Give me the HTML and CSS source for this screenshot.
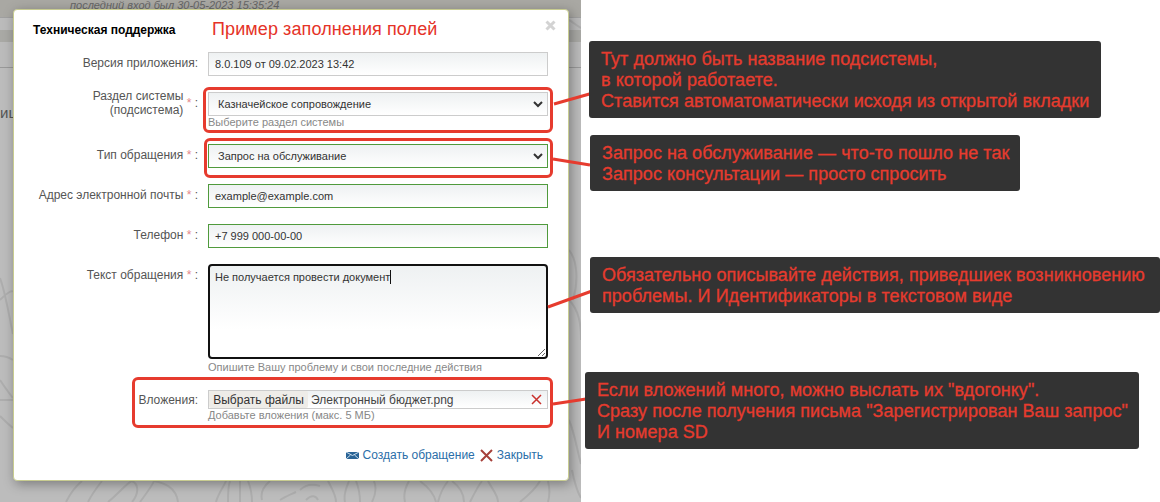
FILE: index.html
```html
<!DOCTYPE html>
<html lang="en">
<head>
    <meta charset="UTF-8">
    <title>Техническая поддержка</title>
    <link rel="stylesheet" href="styles.css">
</head>
<body>
    <div class="backdrop">
        <p class="last-login">последний вход был 30-05-2023 15:35:24</p>
        <div class="band-line"></div>
        <div class="band"></div>
        <div class="band-line band-line-low"></div>
        <p class="cut-word">ице</p>
        <svg class="ornament" width="581" height="502" viewBox="0 0 581 502" fill="none" stroke="#000" stroke-opacity="0.08" stroke-width="2">
            <path d="M0 278c6 16 10 44 13 56M0 300c8-8 12-10 13-8M0 356c6 0 10 2 13 4M0 380c4 6 8 12 13 18M0 400h13M0 416c4 4 8 8 13 12"/>
            <path d="M66 502c4-8 10-16 16-21M88 502c4-8 10-16 14-21M108 502c10-8 20-20 24-21c8 4 6 14 0 21M140 502c6-8 12-16 14-21c10 2 22 6 24 21"/>
            <path d="M216 502c2-8 8-16 10-21M228 502c0-8 0-16 2-21M240 502c0-8 0-16 0-21M252 502c0-8-2-16-4-21M262 500c-2-8 2-14 8-19M280 500c6-4 12-6 16-8"/>
            <path d="M300 490c6-6 14-6 20-4M306 500c6-6 10-4 12 0M328 481c4 8 8 14 8 21M345 502c-2-8 2-16 4-21M360 502c0-8-2-16-4-21M372 502c4-8 4-16 2-21"/>
            <path d="M405 502c-2-8 0-14 4-21M420 481c8 6 14 12 16 21M438 502c2-8 6-16 10-21M452 481c8 6 12 14 12 21M470 502c4-8 8-16 12-21M488 481c4 8 10 14 10 21"/>
            <path d="M520 502c10-8 16-14 20-21M548 481c2 8 2 14 0 21M572 470c2 10 4 20 9 28"/>
            <path d="M569 250c8 10 10 30 4 50M569 300c10 10 12 24 12 40M569 420c6 14 8 30 12 44M569 20c4 2 8 6 12 8"/>
        </svg>

        <div class="modal">
            <header class="modal-head">
                <h2 class="modal-title">Техническая поддержка</h2>
                <span class="example-title">Пример заполнения полей</span>
                <svg class="modal-close" width="11" height="11" viewBox="0 0 11 11"><path d="M1.500 1.500l8 8M9.500 1.500l-8 8" stroke="#d3d3d3" stroke-width="3"/></svg>
            </header>

            <form class="support-form">
                <div class="form-row">
                    <label>Версия приложения:</label>
                    <div class="field">
                        <input class="control" type="text" value="8.0.109 от 09.02.2023 13:42">
                    </div>
                </div>

                <div class="form-row">
                    <label class="label-double"><span>Раздел системы<br>(подсистема)</span>&nbsp;<i>*</i> :</label>
                    <div class="field">
                        <div class="select-wrap">
                            <select class="control"><option>Казначейское сопровождение</option></select>
                            <svg class="chevron" width="10" height="7" viewBox="0 0 10 7"><path d="M1 1l4 4 4-4" fill="none" stroke="#333" stroke-width="2"/></svg>
                        </div>
                        <p class="hint">Выберите раздел системы</p>
                    </div>
                </div>

                <div class="form-row">
                    <label>Тип обращения <i>*</i> :</label>
                    <div class="field">
                        <div class="select-wrap">
                            <select class="control valid"><option>Запрос на обслуживание</option></select>
                            <svg class="chevron" width="10" height="7" viewBox="0 0 10 7"><path d="M1 1l4 4 4-4" fill="none" stroke="#333" stroke-width="2"/></svg>
                        </div>
                    </div>
                </div>

                <div class="form-row">
                    <label>Адрес электронной почты <i>*</i> :</label>
                    <div class="field">
                        <input class="control valid" type="text" value="example@example.com">
                    </div>
                </div>

                <div class="form-row">
                    <label>Телефон <i>*</i> :</label>
                    <div class="field">
                        <input class="control valid" type="text" value="+7 999 000-00-00">
                    </div>
                </div>

                <div class="form-row form-row-text">
                    <label>Текст обращения <i>*</i> :</label>
                    <div class="field">
                        <div class="text-box">Не получается провести документ<span class="caret"></span></div>
                        <p class="hint hint-text">Опишите Вашу проблему и свои последние действия</p>
                    </div>
                </div>

                <div class="form-row form-row-files">
                    <label>Вложения:</label>
                    <div class="field">
                        <div class="file-box">
                            <button type="button" class="file-button">Выбрать файлы</button>
                            <span class="file-name">Электронный бюджет.png</span>
                            <svg class="file-remove" width="11" height="11" viewBox="0 0 11 11"><path d="M1 1l9 9M10 1l-9 9" stroke="#c9302c" stroke-width="1.500"/></svg>
                        </div>
                        <p class="hint">Добавьте вложения (макс. 5 МБ)</p>
                    </div>
                </div>

                <div class="modal-actions">
                    <a href="#">
                        <svg width="13" height="7" viewBox="0 0 13 7"><rect width="13" height="7" fill="#2a6496"/><path d="M0 0l6.500 3.500L13 0M0 7l4.500-4M13 7 8.500 3" fill="none" stroke="#cfe0ee" stroke-width="1"/></svg>
                        Создать обращение
                    </a>
                    <a href="#">
                        <svg width="13" height="13" viewBox="0 0 13 13"><path d="M1 1l11 11M12 1 1 12" stroke="#a6403a" stroke-width="2"/></svg>
                        Закрыть
                    </a>
                </div>
            </form>
        </div>
    </div>

    <!-- annotations drawn over the screenshot -->
    <div class="mark mark-section"></div>
    <div class="mark mark-type"></div>
    <div class="mark mark-files"></div>

    <svg class="connectors" width="600" height="502" viewBox="0 0 600 502" stroke="#e63b2e" stroke-width="3" fill="none">
        <path d="M554 104 593 93"/>
        <path d="M553 159 590 165"/>
        <path d="M548 307 592 291"/>
        <path d="M553 404 586 399"/>
    </svg>

    <div class="note note-section">Тут должно быть название подсистемы,<br>в которой работаете.<br>Ставится автоматоматически исходя из открытой вкладки</div>
    <div class="note note-type">Запрос на обслуживание — что-то пошло не так<br>Запрос консультации — просто спросить</div>
    <div class="note note-text">Обязательно описывайте действия, приведшиек возникновению<br>проблемы. И Идентификаторы в текстовом виде</div>
    <div class="note note-files">Если вложений много, можно выслать их "вдогонку".<br>Сразу после получения письма "Зарегистрирован Ваш запрос"<br>И номера SD</div>
</body>
</html>
```

FILE: styles.css
```css
* {
    margin: 0;
    padding: 0;
    box-sizing: border-box;
    font-family: "Liberation Sans", Arial, sans-serif;
}

html, body {
    height: 502px;
    overflow: hidden;
    background: #fff;
}

.backdrop {
    position: relative;
    width: 581px;
    height: 502px;
    overflow: hidden;
    background: #bcbcbc;
}

.last-login {
    height: 17px;
    padding-left: 70px;
    font-size: 11px;
    line-height: 11px;
    font-style: italic;
    color: #666;
    background: #a9a8a3;
}

.band-line {
    height: 13px;
    background: #bbb;
    border-top: 1px solid #a0a0a0;
}

.band {
    height: 12px;
    background: #a9a9a5;
}

.band-line-low {
    height: 26px;
    background: #bbb;
    border-top: 0;
    border-bottom: 1px solid #999;
}

.cut-word {
    padding-top: 35px;
    font-size: 15px;
    line-height: 20px;
    color: #555;
}

.ornament {
    position: absolute;
    left: 0;
    top: 0;
}

.modal {
    position: absolute;
    left: 13px;
    top: 9px;
    width: 556px;
    height: 472px;
    background: #fff;
    border: 1px solid #c8cc90;
    border-radius: 4px;
    box-shadow: 2px 3px 12px rgba(0, 0, 0, 0.35);
}

.modal-head {
    display: flex;
    align-items: center;
    height: 42px;
    padding: 0 12px 3px 19px;
}

.modal-title {
    width: 179px;
    font-size: 12px;
    font-weight: bold;
    color: #000;
}

.example-title {
    flex: 1;
    font-size: 18px;
    letter-spacing: 0.1px;
    color: #e53328;
}

.modal-close {
    margin-bottom: 8px;
}

.form-row {
    display: grid;
    grid-template-columns: 184px 340px;
    column-gap: 10px;
    margin-bottom: 16px;
}

.form-row label {
    padding-top: 4px;
    text-align: right;
    font-size: 12px;
    line-height: 14px;
    color: #555;
}

.form-row label i {
    font-style: normal;
    color: #e58a8a;
}

.form-row .label-double {
    display: flex;
    align-items: center;
    justify-content: flex-end;
    height: 22px;
    padding-top: 0;
    white-space: pre;
}

.control {
    display: block;
    width: 340px;
    height: 24px;
    padding: 0 6px;
    appearance: none;
    border: 1px solid #ccc;
    border-radius: 0;
    outline: none;
    font-size: 11px;
    color: #333;
    background: linear-gradient(#eef1f2, #fff);
}

select.control {
    padding-left: 9px;
}

.control.valid {
    border-color: #4f9a3c;
}

.select-wrap {
    position: relative;
}

.chevron {
    position: absolute;
    right: 5px;
    top: 9px;
}

.hint {
    font-size: 11px;
    line-height: 12px;
    color: #888;
}

.text-box {
    width: 340px;
    height: 95px;
    padding: 4px 5px;
    border: 2px solid #111;
    border-radius: 4px;
    overflow: auto;
    resize: both;
    font-size: 11px;
    line-height: 14px;
    color: #333;
    background: linear-gradient(#eef1f2, #fff 70%);
}

.caret {
    display: inline-block;
    width: 1px;
    height: 14px;
    vertical-align: top;
    background: #111;
}

.hint-text {
    margin-top: 2px;
}

.form-row-text {
    margin-bottom: 17px;
}

.form-row-files {
    margin-bottom: 0;
}

.form-row-files label {
    padding-top: 3px;
}

.file-box {
    display: flex;
    align-items: center;
    height: 19px;
    border: 1px solid #ccc;
    background: linear-gradient(#eef1f2, #fff);
    font-size: 12px;
    color: #444;
}

.file-button {
    width: 99px;
    height: 17px;
    border: 0;
    border-radius: 2px;
    font-size: 12px;
    color: #333;
    background: #eeece8;
}

.file-name {
    flex: 1;
    padding-left: 3px;
}

.file-remove {
    margin-right: 5px;
}

.modal-actions {
    display: flex;
    justify-content: flex-end;
    gap: 5px;
    margin-top: 27px;
    padding-right: 25px;
}

.modal-actions a {
    display: flex;
    align-items: center;
    gap: 4px;
    font-size: 12px;
    line-height: 14px;
    color: #2a6ea8;
    text-decoration: none;
}

.mark {
    position: absolute;
    border: 3px solid #e63b2e;
    border-radius: 6px;
}

.mark-section {
    left: 203px;
    top: 87px;
    width: 350px;
    height: 46px;
}

.mark-type {
    left: 204px;
    top: 138px;
    width: 349px;
    height: 40px;
}

.mark-files {
    left: 132px;
    top: 377px;
    width: 421px;
    height: 51px;
}

.connectors {
    position: absolute;
    left: 0;
    top: 0;
}

.note {
    position: absolute;
    height: 77px;
    padding: 8px 0 0 12px;
    border-radius: 3px;
    font-size: 18px;
    line-height: 21px;
    letter-spacing: 0.05px;
    -webkit-text-stroke: 0.3px #e63b2e;
    color: #e63b2e;
    background: #333;
    white-space: nowrap;
}

.note-section {
    left: 589px;
    top: 41px;
    width: 512px;
}

.note-type {
    left: 590px;
    top: 135px;
    width: 430px;
    height: 56px;
}

.note-text {
    left: 590px;
    top: 257px;
    width: 570px;
    height: 56px;
}

.note-files {
    left: 585px;
    top: 372px;
    width: 554px;
}
```
